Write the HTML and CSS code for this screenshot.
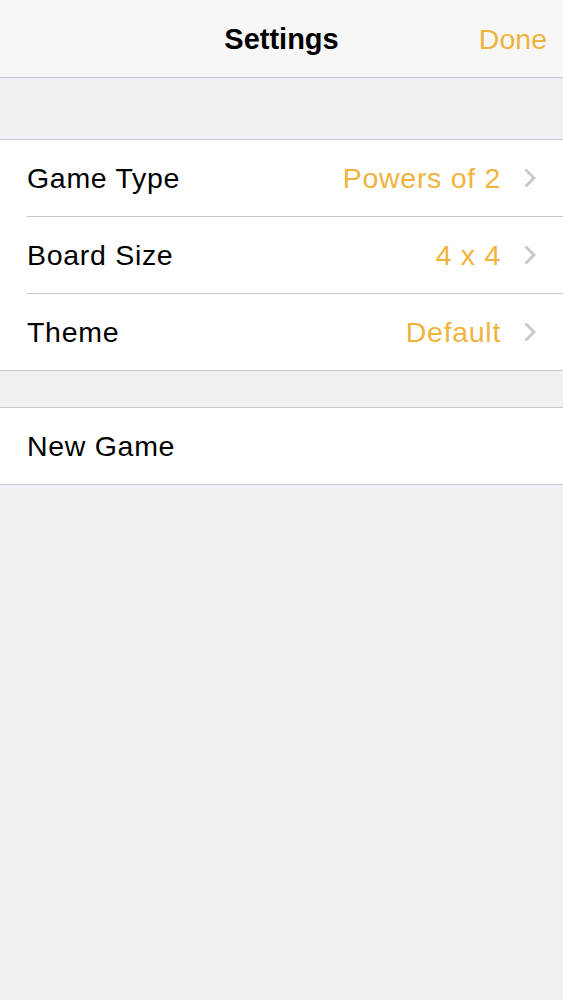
FILE: index.html
```html
<!DOCTYPE html>
<html lang="en">
<head>
	<meta charset="UTF-8">
	<title>Settings</title>
	<link rel="stylesheet" href="styles.css">
</head>
<body>
	<div class="nav">
		<span class="nav-title">Settings</span>
		<span class="nav-done">Done</span>
	</div>

	<div class="gap gap-top"></div>

	<ul class="group">
		<li class="row">
			<span class="label">Game Type</span>
			<span class="value">Powers of 2</span>
			<svg class="chev" width="14" height="22" viewBox="0 0 14 22"><path d="M2.5 2.5l8.5 8.5-8.5 8.5" fill="none" stroke="#c7c7cc" stroke-width="2.8"/></svg>
		</li>
		<li class="row">
			<span class="label">Board Size</span>
			<span class="value">4 x 4</span>
			<svg class="chev" width="14" height="22" viewBox="0 0 14 22"><path d="M2.5 2.5l8.5 8.5-8.5 8.5" fill="none" stroke="#c7c7cc" stroke-width="2.8"/></svg>
		</li>
		<li class="row">
			<span class="label">Theme</span>
			<span class="value">Default</span>
			<svg class="chev" width="14" height="22" viewBox="0 0 14 22"><path d="M2.5 2.5l8.5 8.5-8.5 8.5" fill="none" stroke="#c7c7cc" stroke-width="2.8"/></svg>
		</li>
	</ul>

	<div class="gap gap-mid"></div>

	<ul class="group">
		<li class="row">
			<span class="label">New Game</span>
		</li>
	</ul>
</body>
</html>
```

FILE: styles.css
```css
html,body{margin: 0;padding: 0;}
body{background: #efeff4;font-family: "Liberation Sans", Arial, sans-serif;color: #000;min-height: 1000px;}

.nav{height: 77px;background: #f7f7f8;border-bottom: 1px solid #c8c7cc;position: relative;
	display: flex;align-items: center;justify-content: center;}
.nav-title{font-size: 29px;font-weight: bold;padding-top: 2px;}
.nav-done{position: absolute;right: 16px;top: 0;line-height: 79px;font-size: 28.5px;color: #efb33e;}

.gap-top{height: 61px;}
.gap-mid{height: 36px;}

.group{list-style: none;margin: 0;padding: 0 0 0 27px;background: #fff;
	border-top: 1px solid #c8c7cc;border-bottom: 1px solid #c8c7cc;}
.row{height: 76px;display: flex;align-items: center;padding-right: 26px;
	border-bottom: 1px solid #c8c7cc;font-size: 28.5px;letter-spacing: 0.7px;}
.row:last-child{border-bottom: none;}
.label{flex: 1;}
.value{color: #efb33e;margin-right: 22px;}
.chev{display: block;}
```
